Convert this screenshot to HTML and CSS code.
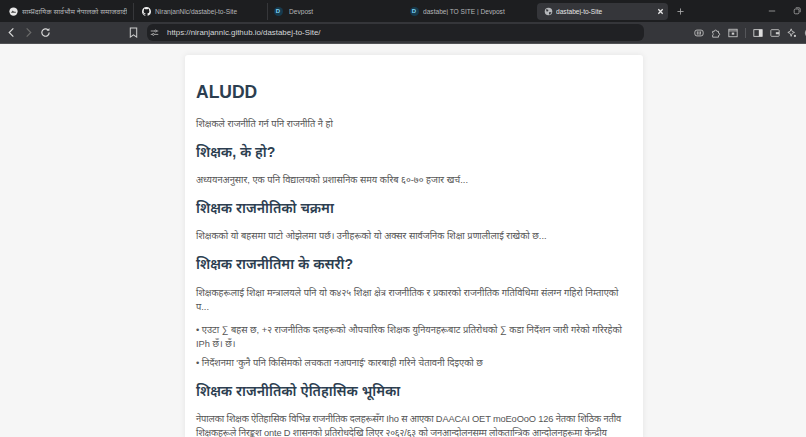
FILE: index.html
```html
<!DOCTYPE html>
<html>
	<head>
		<meta charset="utf-8">
		<title>dastabej-to-Site</title>
		<link rel="stylesheet" href="styles.css">
	</head>
	<body>

		<div class="tabbar">
			<div class="tab tab-first">
				<svg class="ico" viewBox="0 0 12 12"><circle cx="6" cy="6" r="5.500" fill="#e8e8e8"/><path d="M2.500 7.500 5 4.500l2 2 1-1 1.500 2z" fill="#444"/></svg>
				<span class="tab-title">साम्प्रदायिक सार्वभौम नेपालको समाजवादी</span>
			</div>
			<div class="tab tab-gh">
				<svg class="ico" viewBox="0 0 16 16"><path fill="#f0f0f0" d="M8 0C3.58 0 0 3.58 0 8c0 3.54 2.29 6.53 5.47 7.59.4.07.55-.17.55-.38v-1.34c-2.23.48-2.7-1.07-2.7-1.07-.36-.92-.89-1.17-.89-1.17-.73-.5.05-.49.05-.49.8.06 1.23.82 1.23.82.71 1.22 1.87.87 2.33.66.07-.52.28-.87.5-1.07-1.78-.2-3.64-.89-3.64-3.95 0-.87.31-1.59.82-2.15-.08-.2-.36-1.02.08-2.12 0 0 .67-.21 2.2.82a7.6 7.6 0 0 1 4 0c1.53-1.04 2.2-.82 2.2-.82.44 1.1.16 1.92.08 2.12.51.56.82 1.27.82 2.15 0 3.07-1.87 3.75-3.65 3.95.29.25.54.73.54 1.48v2.2c0 .21.15.46.55.38A8 8 0 0 0 16 8c0-4.42-3.58-8-8-8z"/></svg>
				<span class="tab-title">NiranjanNlc/dastabej-to-Site</span>
			</div>
			<div class="tab tab-dev">
				<span class="dev-ico">D</span>
				<span class="tab-title">Devpost</span>
			</div>
			<div class="tab tab-dev2">
				<span class="dev-ico">D</span>
				<span class="tab-title">dastabej TO SITE | Devpost</span>
			</div>
			<div class="tab tab-active">
				<svg class="ico" viewBox="0 0 12 12"><circle cx="6" cy="6" r="5" fill="#b5b7ba"/><path d="M3 2.500l3 1.500-1 2-2-.5zM7 6.500l3 .5-2 3-1.500-.5z" fill="#35363a"/></svg>
				<span class="tab-title">dastabej-to-Site</span>
				<svg class="tab-close" viewBox="0 0 8 8"><path d="M1.500 1.500l5 5M6.500 1.500l-5 5" stroke="#e8e8e8" stroke-width="1.500"/></svg>
			</div>
			<svg class="tab-new" viewBox="0 0 8 8"><path d="M4 .5v7M.5 4h7" stroke="#a8a8a8" stroke-width="1"/></svg>
			<div class="win-btns">
				<svg viewBox="0 0 10 10"><path d="M1 5h8" stroke="#aaa" stroke-width="1"/></svg>
				<svg viewBox="0 0 10 10"><rect x="1.500" y="2.500" width="6" height="6" rx="1.500" fill="none" stroke="#aaa"/><path d="M3.500 1h4a1.500 1.500 0 0 1 1.500 1.500v4" fill="none" stroke="#aaa"/></svg>
			</div>
		</div>

		<div class="toolbar">
			<svg class="nav" viewBox="0 0 12 12"><path d="M8 1.500 3.500 6 8 10.500" fill="none" stroke="#d8d8d8" stroke-width="1.300"/></svg>
			<svg class="nav" viewBox="0 0 12 12"><path d="M4 1.500 8.500 6 4 10.500" fill="none" stroke="#6b6b6b" stroke-width="1.300"/></svg>
			<svg class="nav" viewBox="0 0 12 12"><path d="M10 6a4 4 0 1 1-1.200-2.800" fill="none" stroke="#d8d8d8" stroke-width="1.300"/><path d="M10.300 1v3.200H7.100z" fill="#d8d8d8"/></svg>
			<svg class="nav bookmark" viewBox="0 0 12 12"><path d="M2.500 1h7v10L6 8.500 2.500 11z" fill="none" stroke="#d0d0d0" stroke-width="1.100"/></svg>
			<div class="urlbar">
				<svg class="tune" viewBox="0 0 12 12"><path d="M1 4h5M9 4h2M1 8.500h2M6 8.500h5" stroke="#ccc"/><circle cx="7.500" cy="4" r="1.300" fill="none" stroke="#ccc"/><circle cx="4.500" cy="8.500" r="1.300" fill="none" stroke="#ccc"/></svg>
				<span class="url">https://niranjannlc.github.io/dastabej-to-Site/</span>
			</div>
			<div class="tools">
				<svg viewBox="0 0 12 12"><rect x="1" y="2.500" width="10" height="7" rx="2.500" fill="none" stroke="#ccc"/><path d="M4 4v4M6 4v4M8 4 7.500 8" stroke="#ccc"/></svg>
				<svg viewBox="0 0 12 12"><path d="M2 4h2a1.500 1.500 0 0 1 3 0h2v2.200a1.400 1.400 0 0 1 0 2.800V11H2V8.500a1.400 1.400 0 0 0 0-2.500z" fill="none" stroke="#ccc"/></svg>
				<svg viewBox="0 0 12 12"><rect x="1" y="1.500" width="10" height="9" fill="none" stroke="#ccc"/><path d="M1 3.500h10" stroke="#ccc"/><rect x="4.500" y="5.500" width="3" height="2.500" fill="#ccc"/></svg>
				<span class="sep"></span>
				<svg viewBox="0 0 12 12"><rect x="1" y="2" width="10" height="8" fill="none" stroke="#ddd"/><rect x="7" y="2" width="4" height="8" fill="#ddd"/></svg>
				<svg viewBox="0 0 12 12"><rect x="1" y="2" width="10" height="8" rx="1" fill="none" stroke="#ccc"/><rect x="7" y="5" width="4" height="2.500" fill="#ccc"/></svg>
				<svg viewBox="0 0 12 12"><path d="M5 1l1.200 3L9 5.300 6.200 6.500 5 10 3.800 6.500 1 5.300 3.800 4z" fill="none" stroke="#ccc"/><circle cx="9.500" cy="9.500" r="1.300" fill="#ccc"/></svg>
				<svg viewBox="0 0 12 12"><circle cx="6" cy="6" r="4.500" fill="none" stroke="#ccc"/><circle cx="6" cy="4.800" r="1.400" fill="#ccc"/></svg>
			</div>
		</div>

		<div class="page">
			<div class="card">
				<h1>ALUDD</h1>
				<p>शिक्षकले राजनीति गर्न पनि राजनीति नै हो</p>
				<h2>शिक्षक, के हो?</h2>
				<p>अध्ययनअनुसार, एक पनि विद्यालयको प्रशासनिक समय करिब ६०-७० हजार खर्च...</p>
				<h2>शिक्षक राजनीतिको चक्रमा</h2>
				<p>शिक्षकको यो बहसमा पाटो ओझेलमा पर्छ। उनीहरूको यो अक्सर सार्वजनिक शिक्षा प्रणालीलाई राखेको छ...</p>
				<h2>शिक्षक राजनीतिमा के कसरी?</h2>
				<p class="lead">शिक्षकहरूलाई शिक्षा मन्त्रालयले पनि यो क४२५ शिक्षा क्षेत्र राजनीतिक र प्रकारको राजनीतिक गतिविधिमा संलग्न गहिरो निम्ताएको प...</p>
				<p>• एउटा ∑ बहस छ, +२ राजनीतिक दलहरूको औपचारिक शिक्षक युनियनहरूबाट प्रतिरोधको ∑ कडा निर्देशन जारी गरेको गरिरहेको IPh छँ। छँ।</p>
				<p>• निर्देशनमा 'कुनै पनि किसिमको लचकता नअपनाई' कारबाही गरिने चेतावनी दिइएको छ</p>
				<h2>शिक्षक राजनीतिको ऐतिहासिक भूमिका</h2>
				<p class="tight">नेपालका शिक्षक ऐतिहासिक विभिन्न राजनीतिक दलहरूसँग Iho स आएका DAACAI OET moEoOoO 126 नेतका शिठिक नतीव शिक्षकहरूले निरङ्कुश onte D शासनको प्रतिरोधदेखि लिएर २०६२/६३ को जनआन्दोलनसम्म लोकतान्त्रिक आन्दोलनहरूमा केन्द्रीय</p>
			</div>
		</div>

	</body>
</html>
```

FILE: styles.css
```css
html,body{
	margin:0;
	height:437px;
	overflow:hidden;
}

body{
	background-color:#f6f6f6;
	font-family:"Liberation Sans","Noto Sans",sans-serif;
}

.tabbar{
	display:flex;
	align-items:center;
	height:22px;
	background-color:#1d1e20;
	color:#b4b6b8;
	font-size:6.600px;
}

.tab{
	display:flex;
	align-items:center;
	height:17px;
	box-sizing:border-box;
	white-space:nowrap;
	overflow:hidden;
}

.tab-first{
	width:134px;
	padding:0 6px 0 8.500px;
	gap:4.500px;
	border-right:1px solid #36373a;
}

.tab-gh{
	width:134px;
	padding:0 6px 0 7.500px;
	gap:4.500px;
	border-right:1px solid #36373a;
}

.tab-dev{
	width:134px;
	padding-left:5.500px;
	gap:6.500px;
}

.tab-dev2{
	width:135px;
	padding-left:7.500px;
	gap:4.500px;
}

.tab-active{
	width:131px;
	padding:0 4.500px 0 6.500px;
	gap:3.500px;
	background-color:#35363a;
	border-radius:4px;
	color:#e6e6e6;
}

.tab-first .tab-title{
	font-size:7px;
}

.tab-title{
	flex:1;
	overflow:hidden;
}

.ico{
	width:9px;
	height:9px;
	flex:none;
}

.dev-ico{
	width:9px;
	height:9px;
	flex:none;
	border-radius:50%;
	background-color:#163a4e;
	color:#7fd3f2;
	font-size:6px;
	font-weight:bold;
	line-height:9px;
	text-align:center;
}

.tab-close{
	width:7px;
	height:7px;
	flex:none;
}

.tab-new{
	width:7px;
	height:7px;
	margin-left:8.500px;
}

.win-btns{
	display:flex;
	gap:17px;
	margin-left:auto;
	padding-right:5px;
}

.win-btns svg{
	width:8px;
	height:8px;
}

.toolbar{
	display:flex;
	align-items:center;
	height:21px;
	padding-left:6px;
	background-color:#35363a;
	border-bottom:1px solid #505154;
	overflow:hidden;
}

.nav{
	width:11px;
	height:11px;
	margin-right:6px;
	flex:none;
}

.bookmark{
	margin-left:71px;
	margin-right:8px;
}

.urlbar{
	display:flex;
	align-items:center;
	gap:8px;
	flex:none;
	width:497px;
	height:17px;
	padding-left:3px;
	box-sizing:border-box;
	border-radius:6px;
	background-color:#202124;
}

.tune{
	width:9px;
	height:9px;
}

.url{
	color:#d4d6d8;
	font-size:7.900px;
}

.tools{
	display:flex;
	align-items:center;
	gap:7px;
	margin-left:50px;
}

.tools svg{
	width:10px;
	height:10px;
	flex:none;
}

.sep{
	width:1px;
	height:10px;
	background-color:#55565a;
}

.page{
	padding-left:185px;
}

.card{
	width:458px;
	margin-top:11px;
	padding:25px 11px 0;
	box-sizing:border-box;
	background-color:#fff;
	border-radius:3px;
	box-shadow:0 0 6px rgba(0,0,0,0.08);
	color:#555;
	font-size:9.300px;
	line-height:14px;
}

h1{
	margin:0 0 13px;
	color:#2c3e50;
	font-size:17.500px;
	line-height:24px;
}

h2{
	margin:9px 0;
	color:#2c3e50;
	font-size:14px;
	font-weight:600;
	line-height:24px;
}

p{
	margin:0 0 5px;
}

.lead{
	margin-top:10px;
	margin-bottom:9px;
}

.tight{
	letter-spacing:-0.15px;
}
```
